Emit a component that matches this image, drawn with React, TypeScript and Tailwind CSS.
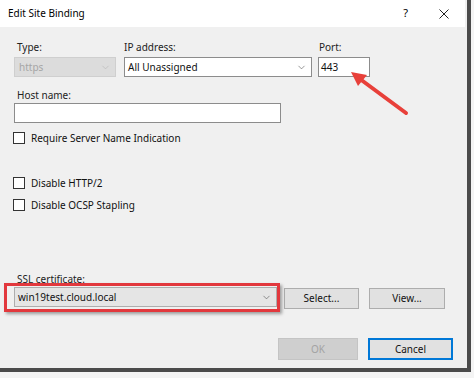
import { ChevronDown } from 'lucide-react';

const font = { fontFamily: '"Noto Sans", "Liberation Sans", sans-serif' };

function Checkbox({ label, className = '' }: { label: string; className?: string }) {
  return (
    <div className={`flex items-center h-[14px] ${className}`}>
      <div className="w-[12px] h-[12px] border border-[#333] bg-white" />
      <span className="ml-[6px] text-[10px] leading-[14px] text-[#111]">{label}</span>
    </div>
  );
}

function Button({ label, className = '', disabled = false }: { label: string; className?: string; disabled?: boolean }) {
  return (
    <div
      className={`flex items-center justify-center text-[10px] ${
        disabled
          ? 'bg-[#cfcfcf] border border-[#c4c4c4] text-[#a3a3a3]'
          : 'bg-[#e1e1e1] border border-[#adadad] text-[#111]'
      } ${className}`}
    >
      {label}
    </div>
  );
}

export default function App() {
  return (
    <div className="w-[474px] h-[378px] bg-[#f4f4f4] overflow-hidden" style={font}>
      <div className="relative w-[471px] h-[372px] bg-[#f0f0f0] border-r-[4px] border-b-[4px] border-[#4b4b4b] flex flex-col">
        {/* title bar */}
        <div className="h-[27px] bg-white flex items-center pl-[8px] mr-[2px]">
          <span className="text-[10px] text-black">Edit Site Binding</span>
          <span className="ml-auto text-[11px] text-black mr-[31px]">?</span>
          <svg width="10" height="10" viewBox="0 0 10 10" className="mr-[16px]">
            <path d="M0.5 0.5 L9.5 9.5 M9.5 0.5 L0.5 9.5" stroke="#222" strokeWidth="1" />
          </svg>
        </div>

        <div className="flex flex-col pl-[14px] pt-[13px]">
          {/* type / ip / port */}
          <div className="flex">
            <div className="flex flex-col w-[102px]">
              <span className="pl-[3px] text-[10px] leading-[14px] text-[#222]">Type:</span>
              <div className="mt-[3px] h-[20px] bg-[#dcdcdc] border border-[#cfcfcf] flex items-center pl-[4px] pr-[4px]">
                <span className="text-[10px] text-[#a6a6a6]">https</span>
                <ChevronDown className="ml-auto text-[#b0b0b0]" size={11} strokeWidth={1.2} />
              </div>
            </div>
            <div className="flex flex-col w-[188px] ml-[8px]">
              <span className="text-[10px] leading-[14px] text-[#222]">IP address:</span>
              <div className="mt-[3px] h-[20px] bg-white border border-[#8c8c8c] flex items-center pl-[3px] pr-[4px]">
                <span className="text-[10px] text-[#111]">All Unassigned</span>
                <ChevronDown className="ml-auto text-[#444]" size={11} strokeWidth={1.2} />
              </div>
            </div>
            <div className="flex flex-col w-[52px] ml-[6px]">
              <span className="pl-[1px] text-[10px] leading-[14px] text-[#222]">Port:</span>
              <div className="mt-[3px] h-[20px] bg-white border border-[#8c8c8c] flex items-center pl-[2px]">
                <span className="text-[10px] text-[#111]">443</span>
              </div>
            </div>
          </div>

          {/* host name */}
          <span className="mt-[11px] pl-[3px] text-[10px] leading-[14px] text-[#222]">Host name:</span>
          <div className="mt-[1px] w-[267px] h-[20px] bg-white border border-[#8c8c8c]" />

          <Checkbox label="Require Server Name Indication" className="mt-[8px] -ml-[1px]" />
          <Checkbox label="Disable HTTP/2" className="mt-[31px] -ml-[1px]" />
          <Checkbox label="Disable OCSP Stapling" className="mt-[8px] -ml-[1px]" />

          {/* ssl certificate */}
          <span className="mt-[60px] pl-[3px] text-[10px] leading-[14px] text-[#222]">SSL certificate:</span>
          <div className="mt-[1px] flex items-start">
            <div className="relative w-[263px] h-[20px] bg-[#e5e5e5] border border-[#adadad] flex items-center pl-[3px] pr-[4px]">
              <span className="text-[10px] text-[#111]">win19test.cloud.local</span>
              <ChevronDown className="ml-auto text-[#444]" size={11} strokeWidth={1.2} />
              <div className="absolute -left-[11px] -right-[4px] -top-[5px] -bottom-[6px] border-[3px] border-[#e2383d] shadow-[2px_2px_3px_rgba(0,0,0,0.35)]" />
            </div>
            <Button label="Select..." className="ml-[7px] mt-[1px] w-[75px] h-[21px]" />
            <Button label="View..." className="ml-[10px] mt-[1px] w-[76px] h-[21px]" />
          </div>

          {/* ok / cancel */}
          <div className="mt-[29px] flex">
            <Button label="OK" disabled className="ml-[264px] w-[80px] h-[22px]" />
            <Button label="Cancel" className="ml-[10px] w-[85px] h-[22px] !border-[#0078d7] !border-2" />
          </div>
        </div>

        {/* annotation arrow */}
        <svg className="absolute left-0 top-0 pointer-events-none" width="471" height="372">
          <line x1="406" y1="113" x2="360" y2="79" stroke="#e8403a" strokeWidth="4" strokeLinecap="round" />
          <path d="M351 72 L367 75 L358 86 Z" fill="#e8403a" />
        </svg>
      </div>
    </div>
  );
}
